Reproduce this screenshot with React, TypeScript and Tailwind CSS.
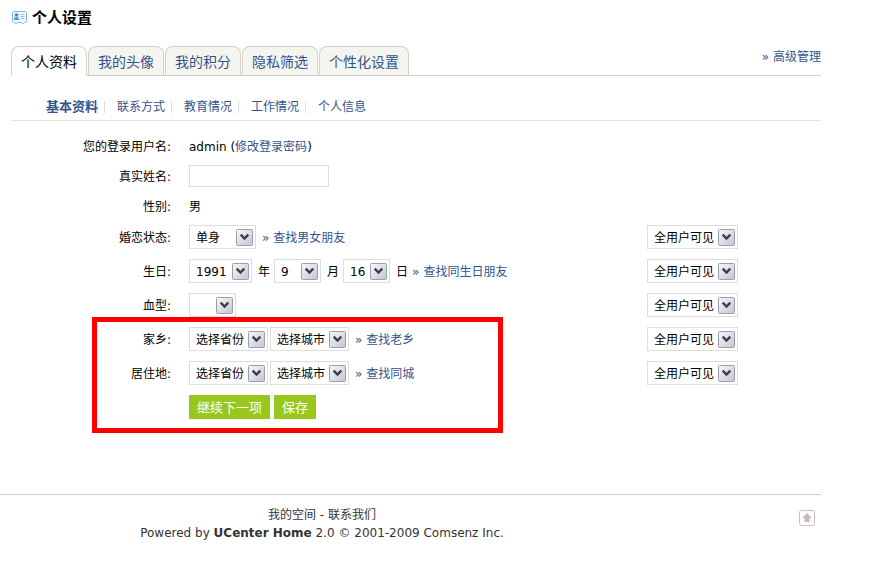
import { ReactNode } from "react";
import clsx from "clsx";

const tabs = ["个人资料", "我的头像", "我的积分", "隐私筛选", "个性化设置"];
const sections = ["基本资料", "联系方式", "教育情况", "工作情况", "个人信息"];

interface SelectProps {
  label: string;
  options: string[];
  className: string;
}

function Select({ label, options, className }: SelectProps) {
  return (
    <span className={clsx("relative inline-block h-6", className)}>
      <select
        aria-label={label}
        className="block h-6 w-full appearance-none border border-[#dddddd] bg-white pl-[6px] pt-[2px] text-xs leading-5 text-black"
      >
        {options.map((option) => (
          <option key={option}>{option}</option>
        ))}
      </select>
      <svg
        className="pointer-events-none absolute right-[3px] top-1 h-[17px] w-[17px]"
        viewBox="0 0 17 17"
      >
        <defs>
          <linearGradient id="arrow" x1="0" y1="0" x2="1" y2="1">
            <stop offset="0" stopColor="#f8f8fb" />
            <stop offset="1" stopColor="#c4c4d2" />
          </linearGradient>
        </defs>
        <rect x=".5" y=".5" width="16" height="16" rx="1" fill="url(#arrow)" stroke="#9a9fb0" />
        <path d="M4.7 5.7 8.5 9.5l3.8-3.8" fill="none" stroke="#3c3d46" strokeWidth="2.4" />
      </svg>
    </span>
  );
}

interface RowProps {
  label: string;
  htmlFor?: string;
  visibility?: boolean;
  children: ReactNode;
}

function Row({ label, htmlFor, visibility, children }: RowProps) {
  return (
    <div className={clsx("flex items-center", visibility ? "h-6" : "h-[22px]")}>
      <label htmlFor={htmlFor} className="w-[171px] shrink-0 pt-[2px] text-right">
        {label}:
      </label>
      <div className="ml-[18px] flex flex-1 items-center">{children}</div>
      {visibility && (
        <div className="mr-[83px] flex">
          <Select label={`${label} 可见范围`} options={["全用户可见"]} className="w-[91px]" />
        </div>
      )}
    </div>
  );
}

function FindLink({ children, className }: { children: ReactNode; className?: string }) {
  return (
    <a href="#" className={clsx("flex gap-1 pt-[2px] text-[#34538c]", className)}>
      <span>»</span>
      {children}
    </a>
  );
}

function Unit({ children }: { children: ReactNode }) {
  return <span className="ml-[6px] mr-1 pt-[2px]">{children}</span>;
}

export default function App() {
  return (
    <div className="bg-white pr-[49px] font-['DejaVu_Sans','Noto_Sans_CJK_SC',sans-serif] text-xs leading-[18px] text-black">
      <main>
        <h1 className="ml-3 flex h-[34px] items-center gap-[5px] pt-px text-[15px] font-bold">
          <svg className="h-[13px] w-[15px]" viewBox="0 0 15 13">
            <path
              d="M1.5.5h12l1 1v9l-1 1h-1l-1 1h-1l-1-1h-4l-1 1h-1l-1-1h-1l-1-1v-9z"
              fill="#f1f9fe"
              stroke="#7db4da"
            />
            <rect x="2" y="2" width="5" height="7" fill="#b5daf1" />
            <circle cx="4.5" cy="4" r="1.4" fill="#5f7489" />
            <path d="M2 9c0-4 5-4 5 0z" fill="#5a9bc9" />
            <path d="M8.5 3.5h4M8.5 5.5h4M8.5 7.5h4" stroke="#8fbddb" />
          </svg>
          个人设置
        </h1>

        {/* Tabs */}
        <div className="ml-[11px] mt-3 flex justify-between border-b border-[#cccccc]">
          <nav className="-mb-px flex gap-px">
            {tabs.map((tab, i) => (
              <a
                key={tab}
                href="#"
                className={clsx(
                  "h-[30px] rounded-t-lg border border-[#d3d3c3] px-[9px] text-sm leading-[30px]",
                  i === 0
                    ? "border-b-white bg-white text-black"
                    : "border-b-[#cccccc] bg-[#f5f5f0] text-[#34538c]"
                )}
              >
                {tab}
              </a>
            ))}
          </nav>
          <FindLink>高级管理</FindLink>
        </div>

        <nav className="ml-[11px] flex h-[45px] items-end border-b border-[#e6e6d2] pb-1 pl-[23px]">
          {sections.map((section, i) => (
            <a
              key={section}
              href="#"
              className={clsx(
                "flex items-center whitespace-nowrap pl-3 text-[#34538c]",
                i === 0 && "text-[13px] font-bold"
              )}
            >
              {section}
              {i < sections.length - 1 && <span className="ml-[6px] h-3 w-px bg-[#dddddd]" />}
            </a>
          ))}
        </nav>

        <form className="pt-[14px]">
          <div className="flex flex-col gap-2">
            <Row label="您的登录用户名">
              <span className="pt-[2px]">
                admin (
                <a href="#" className="text-[#34538c]">
                  修改登录密码
                </a>
                )
              </span>
            </Row>
            <Row label="真实姓名" htmlFor="name">
              <input id="name" type="text" className="h-[22px] w-[140px] border border-[#dddddd] px-1" />
            </Row>
            <Row label="性别">
              <span className="pt-[2px]">男</span>
            </Row>
          </div>

          <div className="mt-2 flex flex-col gap-[10px]">
            <Row label="婚恋状态" visibility>
              <Select label="婚恋状态" options={["单身", "非单身"]} className="w-[67px]" />
              <FindLink className="ml-[6px]">查找男女朋友</FindLink>
            </Row>
            <Row label="生日" visibility>
              <Select label="年" options={["1991"]} className="w-[63px]" />
              <Unit>年</Unit>
              <Select label="月" options={["9"]} className="w-[47px]" />
              <Unit>月</Unit>
              <Select label="日" options={["16"]} className="w-[47px]" />
              <Unit>日</Unit>
              <FindLink>查找同生日朋友</FindLink>
            </Row>
            <Row label="血型" visibility>
              <Select label="血型" options={["", "A", "B", "O", "AB"]} className="w-[47px]" />
            </Row>

            {/* Highlighted part */}
            <div className="relative flex flex-col gap-[10px]">
              <div className="pointer-events-none absolute -bottom-[14px] -top-[10px] left-[92px] w-[411px] border-5 border-[#fe0000]" />
              <Row label="家乡" visibility>
                <Select label="家乡省份" options={["选择省份"]} className="mr-[2px] w-[79px]" />
                <Select label="家乡城市" options={["选择城市"]} className="w-[79px]" />
                <FindLink className="ml-[6px]">查找老乡</FindLink>
              </Row>
              <Row label="居住地" visibility>
                <Select label="居住省份" options={["选择省份"]} className="mr-[2px] w-[79px]" />
                <Select label="居住城市" options={["选择城市"]} className="w-[79px]" />
                <FindLink className="ml-[6px]">查找同城</FindLink>
              </Row>
              <div className="ml-[189px] flex gap-1 text-[13px] text-white">
                <button type="button" className="h-6 bg-[#98c81e] px-2 pt-[2px]">
                  继续下一项
                </button>
                <button type="button" className="h-6 bg-[#98c81e] px-2 pt-[2px]">
                  保存
                </button>
              </div>
            </div>
          </div>
        </form>
      </main>

      <footer className="mt-[75px] flex border-t border-[#cccccc] pt-[11px] text-[#333333]">
        <div className="flex-1 text-center">
          <p>
            <a href="#">我的空间</a> - <a href="#">联系我们</a>
          </p>
          <p>
            Powered by <b>UCenter Home</b> 2.0 © 2001-2009 Comsenz Inc.
          </p>
        </div>
        <div className="flex w-[177px] justify-end pr-[6px] pt-1">
          <a href="#" aria-label="返回顶部">
            <svg className="h-4 w-4" viewBox="0 0 16 16">
              <rect x=".5" y=".5" width="15" height="15" rx="2" fill="#fff" stroke="#cdbfbf" />
              <path d="M8 3 3 8h2.5v4h5V8H13z" fill="#c9b9b9" />
            </svg>
          </a>
        </div>
      </footer>
    </div>
  );
}
